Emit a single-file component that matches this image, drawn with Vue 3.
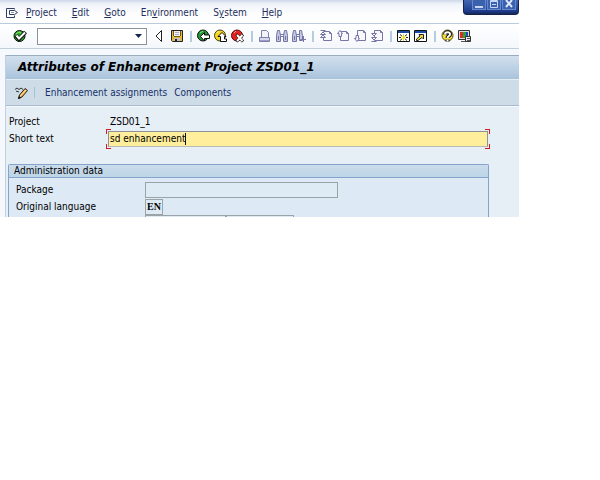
<script setup>
import { ref } from 'vue'

const menus = [
  { key: 'P', before: '', after: 'roject' },
  { key: 'E', before: '', after: 'dit' },
  { key: 'G', before: '', after: 'oto' },
  { key: 'v', before: 'En', after: 'ironment' },
  { key: 'y', before: 'S', after: 'stem' },
  { key: 'H', before: '', after: 'elp' }
]

const command = ref('')
const shortText = ref('sd enhancement')
const packageName = ref('')
const language = ref('EN')
</script>

<template>
  <main class="window">
    <header class="menubar">
      <button class="icon-btn session" aria-label="Session menu">
        <svg width="14" height="12" viewBox="0 0 14 12" fill="none" stroke="#303e66">
          <path d="M9.500 2.500V1.500H1.500V10.500H9.500V8.500" />
          <path d="M4.500 3.500H9.500L12.500 5.500L9.500 7.500H4.500Z" fill="#fff" />
          <path d="M6 5.500H9" stroke="#8a94b4" />
        </svg>
      </button>
      <nav class="menus">
        <a v-for="m in menus" :key="m.after" href="#">{{ m.before }}<u>{{ m.key }}</u>{{ m.after }}</a>
      </nav>
      <div class="controls">
        <button aria-label="Minimize">
          <svg width="12" height="10" viewBox="0 0 12 10"><path d="M2 7H10" stroke="#c6d5f4" stroke-width="2" /></svg>
        </button>
        <button aria-label="Restore">
          <svg width="12" height="10" viewBox="0 0 12 10" fill="none" stroke="#c6d5f4"><path d="M2.500 0.500H9.500V7.500H2.500ZM2 1.500H10M4 4.500H8" /></svg>
        </button>
        <button aria-label="Close">
          <svg width="12" height="10" viewBox="0 0 12 10"><path d="M3 0L9 7M9 0L3 7" stroke="#dce7fb" stroke-width="2" /></svg>
        </button>
      </div>
    </header>

    <div class="toolbar">
      <button class="icon-btn" aria-label="Enter">
        <svg width="14" height="14" viewBox="0 0 14 14">
          <circle cx="6.500" cy="7" r="5.500" fill="#2ba32b" stroke="#111" />
          <path d="M3 5L6 3L8 4" stroke="#9be870" fill="none" />
          <path d="M3 6.500L6 10L12.500 3" stroke="#111" stroke-width="4" fill="none" />
          <path d="M3.500 6.500L6 9.500L12 3.500" stroke="#fff" stroke-width="2" fill="none" />
        </svg>
      </button>
      <div class="command">
        <input v-model="command" aria-label="Command">
        <button class="arrow" aria-label="Command history">
          <svg width="7" height="4" viewBox="0 0 7 4"><path d="M0 0H7L3.500 4Z" fill="#17264f" /></svg>
        </button>
      </div>
      <div class="group">
        <button class="icon-btn" aria-label="Collapse">
          <svg width="14" height="14" viewBox="0 0 14 14"><path d="M8.500 1.500V12.500L3 7Z" fill="#fff" stroke="#222" /></svg>
        </button>
        <button class="icon-btn" aria-label="Save">
          <svg width="14" height="14" viewBox="0 0 14 14">
            <path d="M1.500 1.500H12.500V12.500H2.500L1.500 11.500Z" fill="#e0bd35" stroke="#222" />
            <path d="M4 2H10V7H4Z" fill="#f2eef8" />
            <path d="M3.500 2V7M10.500 2V7M4 7.500H10" stroke="#6b5b18" />
            <path d="M5 3.500H9M5 5.500H9" stroke="#b4a9c4" />
            <path d="M4 9H10V12H4Z" fill="#c8bccc" />
            <path d="M5 10H7V12H5Z" fill="#222" />
          </svg>
        </button>
      </div>
      <i class="sep"></i>
      <div class="group">
        <button class="icon-btn" aria-label="Back">
          <svg width="14" height="14" viewBox="0 0 14 14">
            <circle cx="6" cy="6.500" r="5.500" fill="#249638" stroke="#111" />
            <path d="M3 4L6 2" stroke="#8ae584" />
            <path d="M3.500 7.500L7.500 3.500V6H12.500V9.500H7.500V12Z" fill="#fff" stroke="#111" />
          </svg>
        </button>
        <button class="icon-btn" aria-label="Exit">
          <svg width="14" height="14" viewBox="0 0 14 14">
            <circle cx="6" cy="6.500" r="5.500" fill="#f4d51f" stroke="#4a4010" />
            <path d="M3 4L5 2" stroke="#fff5a0" />
            <path d="M8 3.500L12 7.500H10.500V10H12.500V12.500H6.500V7.500H4Z" fill="#fff" stroke="#111" />
          </svg>
        </button>
        <button class="icon-btn" aria-label="Cancel">
          <svg width="14" height="14" viewBox="0 0 14 14">
            <circle cx="6" cy="6.500" r="5.500" fill="#e52222" stroke="#5a0c0c" />
            <path d="M3 4L5 2" stroke="#ff9c8c" />
            <path d="M5.500 5.500L12 12.500M12 5.500L5.500 12.500" stroke="#111" stroke-width="3" />
            <path d="M6 6L11.500 12M11.500 6L6 12" stroke="#fff" stroke-width="2" />
          </svg>
        </button>
      </div>
      <i class="sep"></i>
      <div class="group">
        <button class="icon-btn" aria-label="Print">
          <svg width="14" height="14" viewBox="0 0 14 14" fill="#f1f2fa" stroke="#7d7fad">
            <path d="M3.500 1.500H8.500L10.500 3.500V8.500H3.500Z" />
            <path d="M1.500 8.500H11.500V12.500H1.500Z" fill="#d8daec" />
            <path d="M2 11.500H11" stroke="#9b9dc4" />
          </svg>
        </button>
        <button class="icon-btn" aria-label="Find">
          <svg width="14" height="14" viewBox="0 0 14 14" fill="#c5c7e2" stroke="#7476a5">
            <path d="M2.500 1.500H4.500L5.500 6.500V12.500H1.500V6.500ZM9.500 1.500H11.500L12.500 6.500V12.500H8.500V6.500Z" />
            <path d="M5 5.500H9M5 7.500H9M3.500 7V11M10.500 7V11" />
          </svg>
        </button>
        <button class="icon-btn" aria-label="Find next">
          <svg width="14" height="14" viewBox="0 0 14 14" fill="#c5c7e2" stroke="#7476a5">
            <path d="M1.500 1.500H3.500L4.500 6.500V12.500H0.500V6.500ZM7.500 1.500H9.500L10.500 6.500V11.500H7.500V6.500Z" />
            <path d="M4 5.500H8M4 7.500H8M2.500 7V11M11.500 7V13M8.500 10.500H14" />
          </svg>
        </button>
      </div>
      <i class="sep"></i>
      <div class="group">
        <button class="icon-btn" aria-label="First page">
          <svg width="14" height="14" viewBox="0 0 14 14" fill="#f7f7fc" stroke="#7476a5">
            <path d="M4.500 2.500H10.500L12.500 4.500V11.500H4.500Z" />
            <path d="M10.500 2.500V4.500H12.500" fill="none" />
            <path d="M1.500 1.500H6.500M4 3L1.500 5.500H6.500ZM4 6L1.500 8.500H6.500Z" />
          </svg>
        </button>
        <button class="icon-btn" aria-label="Previous page">
          <svg width="14" height="14" viewBox="0 0 14 14" fill="#f7f7fc" stroke="#7476a5">
            <path d="M4.500 2.500H10.500L12.500 4.500V11.500H4.500Z" />
            <path d="M10.500 2.500V4.500H12.500" fill="none" />
            <path d="M4 1.500L1.500 4.500H3V7.500H5.500V4.500H6.500Z" />
          </svg>
        </button>
        <button class="icon-btn" aria-label="Next page">
          <svg width="14" height="14" viewBox="0 0 14 14" fill="#f7f7fc" stroke="#7476a5">
            <path d="M4.500 1.500H10.500L12.500 3.500V11.500H4.500Z" />
            <path d="M10.500 1.500V3.500H12.500" fill="none" />
            <path d="M4 12.500L1.500 9.500H3V6.500H5.500V9.500H6.500Z" />
          </svg>
        </button>
        <button class="icon-btn" aria-label="Last page">
          <svg width="14" height="14" viewBox="0 0 14 14" fill="#f7f7fc" stroke="#7476a5">
            <path d="M4.500 1.500H10.500L12.500 3.500V11.500H4.500Z" />
            <path d="M10.500 1.500V3.500H12.500" fill="none" />
            <path d="M1.500 12.500H6.500M4 11L1.500 8.500H6.500ZM4 7L1.500 4.500H6.500Z" />
          </svg>
        </button>
      </div>
      <i class="sep"></i>
      <div class="group">
        <button class="icon-btn" aria-label="New session">
          <svg width="14" height="14" viewBox="0 0 14 14">
            <path d="M0.500 1.500H12.500V12.500H0.500Z" fill="#fff" stroke="#111" />
            <path d="M1 2H12V4H1Z" fill="#1c4ba5" />
            <path d="M3 5.500L5 7M10 5.500L8 7M3 11.500L5 10M10 11.500L8 10M2 8.500H4M9 8.500H11" stroke="#222" />
            <path d="M6.500 5V12M4 7L9 10M9 7L4 10" stroke="#e9d72a" />
          </svg>
        </button>
        <button class="icon-btn" aria-label="Create shortcut">
          <svg width="14" height="14" viewBox="0 0 14 14">
            <path d="M0.500 1.500H12.500V12.500H0.500Z" fill="#fff" stroke="#111" />
            <path d="M1 2H12V4H1Z" fill="#1c4ba5" />
            <path d="M2.500 11.500V10L6 7L5 5.500H9.500V10L8 8.500L4 11.500Z" fill="#f0df35" stroke="#222" />
          </svg>
        </button>
      </div>
      <i class="sep"></i>
      <div class="group">
        <button class="icon-btn" aria-label="Help">
          <svg width="14" height="14" viewBox="0 0 14 14">
            <circle cx="6.500" cy="6.500" r="5.500" fill="#f4db35" stroke="#5c5017" />
            <path d="M4 5.500C4 2.500 9.500 2.500 9 5.500C9 7 6.500 7 6.500 9M6.500 10.500V12.500" stroke="#111" stroke-width="4" fill="none" />
            <path d="M4 5.500C4 2.500 9.500 2.500 9 5.500C9 7 6.500 7 6.500 9M6.500 10.500V12.500" stroke="#fff" stroke-width="2" fill="none" />
          </svg>
        </button>
        <button class="icon-btn" aria-label="Customize layout">
          <svg width="14" height="14" viewBox="0 0 14 14">
            <path d="M0.500 1.500H11.500V10.500H0.500Z" fill="#ddd" stroke="#333" />
            <path d="M2 3H5V9H2Z" fill="#e02a2a" />
            <path d="M5 3H8V9H5Z" fill="#25a735" />
            <path d="M8 3H10V9H8Z" fill="#254ac5" />
            <path d="M3 12.500H8" stroke="#555" />
            <path d="M7.500 7.500H12.500V12.500H7.500Z" fill="#eee" stroke="#333" />
            <path d="M9 9.500H12M9 11.500H12" stroke="#555" />
          </svg>
        </button>
      </div>
    </div>

    <section class="screen">
      <h1>Attributes of Enhancement Project ZSD01_1</h1>
      <div class="app-toolbar">
        <button class="icon-btn" aria-label="Display or change">
          <svg width="14" height="14" viewBox="0 0 14 14">
            <path d="M1 3.500L3 2L5 3.500L7 2L9 3.500M2 5L5 6" stroke="#333" fill="none" />
            <path d="M4.500 12.500L5.500 9L11 2.500L13.500 4.500L8 11Z" fill="#f2b04c" stroke="#222" />
            <path d="M6.500 10L12 4" stroke="#ffe6a0" />
            <path d="M4 13L5 10L7 12Z" fill="#111" />
          </svg>
        </button>
        <i class="sep"></i>
        <button class="text-btn">Enhancement assignments</button>
        <button class="text-btn">Components</button>
      </div>

      <form class="content" @submit.prevent>
        <div class="row">
          <span class="label">Project</span>
          <output>ZSD01_1</output>
        </div>
        <div class="row">
          <label class="label" for="short-text">Short text</label>
          <div class="focus-field">
            <input id="short-text" v-model="shortText" autocomplete="off">
            <i class="caret"></i>
            <i class="corner tl"></i>
            <i class="corner tr"></i>
            <i class="corner bl"></i>
            <i class="corner br"></i>
          </div>
        </div>

        <section class="panel">
          <h2>Administration data</h2>
          <div class="panel-body">
            <div class="row">
              <label class="label" for="package">Package</label>
              <input id="package" v-model="packageName" class="field package" readonly>
            </div>
            <div class="row">
              <label class="label" for="language">Original language</label>
              <input id="language" v-model="language" class="field language" readonly>
            </div>
            <div class="row cut">
              <span class="label"></span>
              <input class="field created-by" aria-label="Created by" readonly>
              <input class="field created-on" aria-label="Created on" readonly>
            </div>
          </div>
        </section>
      </form>
    </section>
  </main>
</template>

<style>
body {
  margin: 0;
  background: #fff;
}
</style>

<style scoped>
.window {
  position: relative;
  margin-right: 81px;
  overflow: hidden;
  background: #f5f8fc;
  color: #000;
  font-family: "DejaVu Sans Condensed", "DejaVu Sans", sans-serif;
  font-size: 10px;
  line-height: 14px;
}

button,
input {
  box-sizing: border-box;
  margin: 0;
  padding: 0;
  border: 0;
  border-radius: 0;
  background: none;
  color: inherit;
  font: inherit;
  outline: none;
}

svg {
  display: block;
}

.icon-btn {
  display: block;
  flex: none;
}

.menubar {
  display: flex;
  align-items: center;
  gap: 7px;
  height: 24px;
  padding-left: 5px;
  padding-top: 3px;
  box-sizing: border-box;
  background: linear-gradient(#ccd7e7, #f0f4fa 4px, #fdfdfe 14px, #fff);
  border-bottom: 1px solid #bccbdc;
}

.menus {
  display: flex;
  gap: 15px;
}

.menus a {
  color: #24305c;
  text-decoration: none;
}

.controls {
  position: absolute;
  top: 0;
  right: 0;
  display: flex;
  gap: 1px;
  padding: 0 2px 4px 8px;
  background: linear-gradient(#4267b2, #1d3d8c 11px, #15265a);
  border: 1px solid #15234c;
  border-top: 0;
  border-radius: 0 0 4px 4px;
}

.controls button {
  width: 14px;
  height: 10px;
  background: #3a60ae;
  border: 1px solid #6487cd;
  border-top: 0;
}

.toolbar {
  display: flex;
  align-items: center;
  height: 24px;
  padding-left: 13px;
  background: linear-gradient(#fff, #f4f7fb);
  border-bottom: 1px solid #c3cedb;
}

.command {
  display: flex;
  width: 110px;
  height: 17px;
  margin: 0 6px 0 10px;
  box-sizing: border-box;
  background: #fff;
  border: 1px solid #8b909a;
}

.command input {
  flex: 1;
  min-width: 0;
  padding-left: 2px;
}

.arrow {
  padding: 0 4px;
}

.group {
  display: flex;
  gap: 3px;
}

.sep {
  width: 2px;
  height: 11px;
  margin: 0 5px 0 6px;
  background: #b6cbe0;
}

.screen {
  margin: 6px 0 0 5px;
  border-left: 1px solid #c4d0de;
}

h1 {
  margin: 0;
  padding-left: 12px;
  font-family: "DejaVu Sans", sans-serif;
  font-size: 12px;
  font-style: italic;
  font-weight: bold;
  line-height: 23px;
  background: linear-gradient(#d2e0ed, #a9c3dc);
  border-top: 1px solid #99acc2;
  border-bottom: 1px solid #e4edf4;
}

.app-toolbar {
  display: flex;
  align-items: center;
  height: 25px;
  padding-left: 8px;
  background: #cddce7;
  border-bottom: 1px solid #a9bccf;
}

.app-toolbar .sep {
  width: 1px;
  margin-right: 10px;
  background: #a9c1d8;
}

.text-btn {
  margin-right: 7px;
  color: #17306a;
}

.content {
  padding: 6px 30px 0 2px;
  background: #e7eff6;
  border-top: 1px solid #f6f9fc;
}

.row {
  display: flex;
  align-items: center;
  height: 17px;
}

.label {
  flex: none;
  width: 100px;
  padding-left: 1px;
  box-sizing: border-box;
}

.row output {
  padding-left: 2px;
}

.focus-field {
  position: relative;
  display: flex;
  align-items: center;
  flex: 1;
  height: 16px;
  margin-right: 1px;
  padding-left: 1px;
  box-sizing: border-box;
  background: #ffee9c;
  border: 1px solid #8e9298;
  border-bottom-color: #b9bcb6;
}

/* grows with its text so the caret stays behind the last letter */
.focus-field input {
  field-sizing: content;
  height: 14px;
}

.caret {
  width: 1px;
  height: 12px;
  background: #111;
}

.corner {
  position: absolute;
  width: 4px;
  height: 4px;
  border: 0 solid #d01c22;
}

.tl {
  top: -3px;
  left: -3px;
  border-width: 1px 0 0 1px;
}

.tr {
  top: -3px;
  right: -3px;
  border-width: 1px 1px 0 0;
}

.bl {
  bottom: -3px;
  left: -3px;
  border-width: 0 0 1px 1px;
}

.br {
  bottom: -3px;
  right: -3px;
  border-width: 0 1px 1px 0;
}

.panel {
  margin-top: 17px;
  background: #dde9f5;
  border: 1px solid #85a3cb;
  border-bottom: 0;
  border-radius: 2px 2px 0 0;
}

h2 {
  margin: 0;
  padding-left: 5px;
  font-size: 10px;
  font-weight: normal;
  line-height: 12px;
  background: linear-gradient(#cbdcec, #bcd5e7);
  border-bottom: 1px solid #85a3cb;
}

.panel-body {
  padding: 3px 0 0 6px;
}

.panel-body .label {
  width: 130px;
}

.field {
  height: 16px;
  background: #deeaf4;
  border: 1px solid #9aa3a8;
}

.package {
  width: 193px;
}

.language {
  width: 18px;
  padding-left: 1px;
  font-family: "Liberation Serif", serif;
  font-weight: bold;
}

.created-by {
  width: 81px;
}

.created-on {
  width: 68px;
}

.cut {
  align-items: flex-start;
  height: 2px;
  overflow: hidden;
}
</style>
